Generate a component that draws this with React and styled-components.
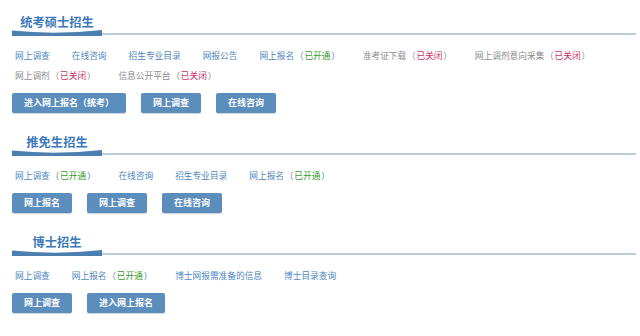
import React from 'react'
import styled, { createGlobalStyle } from 'styled-components'

const GlobalStyle = createGlobalStyle`
  html, body {
    margin: 0;
    padding: 0;
    background: #fff;
  }
  body {
    font-family: "Noto Sans CJK SC", "Noto Sans", sans-serif;
  }
`

const Page = styled.div`
  width: 624px;
  margin-left: 12px;
`

const Section = styled.section`
  margin-bottom: 7px;
`

const Header = styled.div`
  height: 36px;
  display: flex;
  flex-direction: column;
`

const Title = styled.h3`
  margin: 15px 0 0;
  width: 90px;
  text-align: center;
  font-size: 12.2px;
  line-height: 14px;
  font-weight: 700;
  letter-spacing: 0.1px;
  color: #3b78b9;
`

const BarRow = styled.div`
  margin-top: auto;
  display: flex;
  align-items: flex-end;
  height: 6px;
`

const Tab = styled.svg`
  display: block;
  flex: none;
`

const Rule = styled.div`
  flex: 1;
  height: 2px;
  margin-bottom: 1px;
  background: #bccdda;
`

const Links = styled.ul`
  list-style: none;
  margin: 10px 0 0;
  padding: 0 0 0 3px;
  display: flex;
  flex-wrap: wrap;
  column-gap: 22px;
`

const LinkItem = styled.li`
  font-size: 8.7px;
  line-height: 20px;
  white-space: nowrap;
  color: ${(p) => (p.$muted ? '#8c8c8c' : '#4f86bf')};
`

const Paren = styled.span`
  margin: 0 0.8px;
`

const Status = styled.span`
  color: ${(p) => (p.$open ? '#3a9a2c' : '#c8336a')};
`

const Buttons = styled.div`
  display: flex;
  gap: 15px;
  margin-top: 7px;
`

const Btn = styled.button`
  height: 20px;
  padding: 0 12px;
  border: none;
  border-radius: 2px;
  background: #5b8dbd;
  box-shadow: 0 1px 1px rgba(40, 70, 100, 0.25);
  color: #fff;
  font-family: "Noto Sans CJK SC", "Noto Sans", sans-serif;
  font-size: 9px;
  font-weight: 700;
  line-height: 20px;
  white-space: nowrap;
  cursor: pointer;
`

const TabShape = () => (
  <Tab width='90' height='6' viewBox='0 0 90 6'>
    <path d='M0 0.6 Q45 5 90 0 L90 6 L0 6 Z' fill='#4c7fb0' />
  </Tab>
)

const sections = [
  {
    title: '统考硕士招生',
    links: [
      { label: '网上调查' },
      { label: '在线咨询' },
      { label: '招生专业目录' },
      { label: '网报公告' },
      { label: '网上报名', status: 'open' },
      { label: '准考证下载', status: 'closed', muted: true },
      { label: '网上调剂意向采集', status: 'closed', muted: true },
      { label: '网上调剂', status: 'closed', muted: true },
      { label: '信息公开平台', status: 'closed', muted: true },
    ],
    buttons: ['进入网上报名（统考）', '网上调查', '在线咨询'],
  },
  {
    title: '推免生招生',
    links: [
      { label: '网上调查', status: 'open' },
      { label: '在线咨询' },
      { label: '招生专业目录' },
      { label: '网上报名', status: 'open' },
    ],
    buttons: ['网上报名', '网上调查', '在线咨询'],
  },
  {
    title: '博士招生',
    links: [
      { label: '网上调查' },
      { label: '网上报名', status: 'open' },
      { label: '博士网报需准备的信息' },
      { label: '博士目录查询' },
    ],
    buttons: ['网上调查', '进入网上报名'],
  },
]

const App = () => {
  return (
    <Page>
      <GlobalStyle />
      {sections.map((s) => (
        <Section key={s.title}>
          <Header>
            <Title>{s.title}</Title>
            <BarRow>
              <TabShape />
              <Rule />
            </BarRow>
          </Header>
          <Links>
            {s.links.map((l) => (
              <LinkItem key={l.label} $muted={l.muted}>
                {l.label}
                {l.status && (
                  <>
                    <Paren>（</Paren>
                    <Status $open={l.status === 'open'}>{l.status === 'open' ? '已开通' : '已关闭'}</Status>
                    <Paren>）</Paren>
                  </>
                )}
              </LinkItem>
            ))}
          </Links>
          <Buttons>
            {s.buttons.map((b) => (
              <Btn key={b}>{b}</Btn>
            ))}
          </Buttons>
        </Section>
      ))}
    </Page>
  )
}

export default App
